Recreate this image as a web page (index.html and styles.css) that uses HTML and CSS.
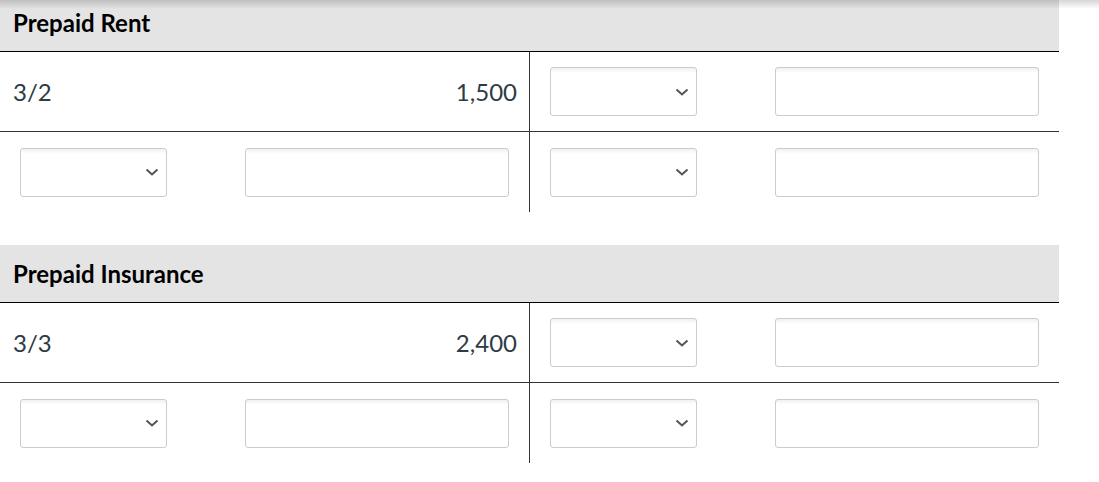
FILE: index.html
```html
<!DOCTYPE html>
<html lang="en">
<head>
  <meta charset="UTF-8">
  <meta name="viewport" content="width=device-width, initial-scale=1.0">
  <title>T-Accounts</title>
  <link rel="stylesheet" href="styles.css">
</head>
<body>

  <!-- Shadow cast by the toolbar above the scrolled area -->
  <div class="top-shadow"></div>

  <main class="ledger-page">

    <!-- Prepaid Rent account -->
    <section class="account">
      <div class="account-title">Prepaid Rent</div>
      <div class="t-account">
        <div class="cell debit first-row">
          <span class="entry-date">3/2</span>
          <span class="entry-amount">1,500</span>
        </div>
        <div class="cell credit first-row">
          <select class="pick"><option></option></select>
          <input type="text" class="amount-input">
        </div>
        <div class="cell debit">
          <select class="pick"><option></option></select>
          <input type="text" class="amount-input">
        </div>
        <div class="cell credit">
          <select class="pick"><option></option></select>
          <input type="text" class="amount-input">
        </div>
      </div>
    </section>

    <!-- Prepaid Insurance account -->
    <section class="account">
      <div class="account-title">Prepaid Insurance</div>
      <div class="t-account">
        <div class="cell debit first-row">
          <span class="entry-date">3/3</span>
          <span class="entry-amount">2,400</span>
        </div>
        <div class="cell credit first-row">
          <select class="pick"><option></option></select>
          <input type="text" class="amount-input">
        </div>
        <div class="cell debit">
          <select class="pick"><option></option></select>
          <input type="text" class="amount-input">
        </div>
        <div class="cell credit">
          <select class="pick"><option></option></select>
          <input type="text" class="amount-input">
        </div>
      </div>
    </section>

  </main>
</body>
</html>
```

FILE: styles.css
```css
/* Base styles */
* {
  margin: 0;
  padding: 0;
  box-sizing: border-box;
}

body {
  font-family: Lato, 'Liberation Sans', Arial, sans-serif;
  background-color: #ffffff;
  color: #2d3b45;
  overflow: hidden;
}

.top-shadow {
  position: fixed;
  top: 0;
  left: 0;
  right: 0;
  height: 9px;
  background: linear-gradient(to bottom, rgba(0, 0, 0, 0.16), rgba(0, 0, 0, 0));
  z-index: 5;
}

/* Page is scrolled a little past the first header */
.ledger-page {
  width: 1059px;
  margin-top: -6px;
}

.account {
  margin-bottom: 33px;
}

.account-title {
  height: 58px;
  display: flex;
  align-items: center;
  padding: 0 13px;
  background-color: #e4e4e4;
  border-bottom: 1px solid #000;
  font-size: 24px;
  font-weight: 700;
  color: #000;
}

/* T-account body */
.t-account {
  display: grid;
  grid-template-columns: 530px 529px;
}

.cell {
  height: 80px;
  display: flex;
  align-items: center;
  justify-content: space-between;
  padding: 0 20px;
}

.cell.first-row {
  border-bottom: 1px solid #2d3539;
}

.cell.debit {
  border-right: 1px solid #2d3539;
}

.debit.first-row {
  padding: 0 12px 0 13px;
}

.entry-date,
.entry-amount {
  font-size: 24px;
  color: #2d3b45;
}

/* Form controls */
.pick {
  appearance: none;
  width: 147px;
  height: 49px;
  border: 1px solid #c7cdd1;
  border-radius: 3px;
  background-color: #fff;
  background-image:
    url("data:image/svg+xml,%3Csvg xmlns='http://www.w3.org/2000/svg' width='14' height='8' viewBox='0 0 14 8'%3E%3Cpath d='M1.5 1.5 L7 6.5 L12.5 1.5' fill='none' stroke='%23555' stroke-width='2'/%3E%3C/svg%3E"),
    linear-gradient(to bottom, rgba(0, 0, 0, 0.06), rgba(0, 0, 0, 0) 5px);
  background-repeat: no-repeat;
  background-position: right 7px center, 0 0;
  font-family: inherit;
  font-size: 18px;
}

.amount-input {
  width: 264px;
  height: 49px;
  border: 1px solid #c7cdd1;
  border-radius: 3px;
  background-color: #fff;
  background-image: linear-gradient(to bottom, rgba(0, 0, 0, 0.06), rgba(0, 0, 0, 0) 5px);
  font-family: inherit;
  font-size: 18px;
}
```
